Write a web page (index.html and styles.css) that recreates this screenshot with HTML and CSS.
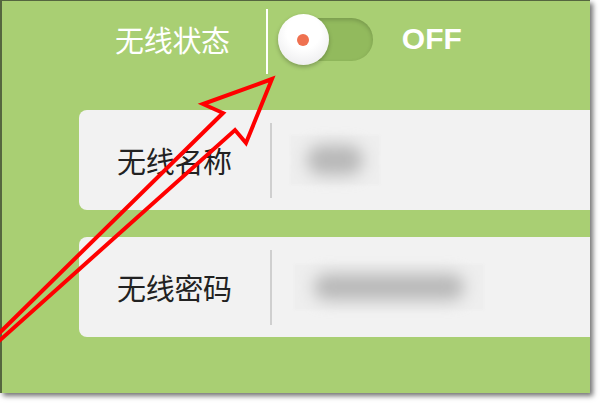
FILE: index.html
```html
<!DOCTYPE html>
<html lang="zh-CN">
<head>
    <meta charset="UTF-8">
    <title>无线设置</title>
    <link rel="stylesheet" href="styles.css">
</head>
<body>
    <div class="frame">
        <div class="status-row">
            <span class="status-label">无线状态</span>
            <span class="divider-light"></span>
            <div class="toggle">
                <span class="knob"><span class="dot"></span></span>
            </div>
            <span class="state">OFF</span>
        </div>

        <div class="card">
            <span class="card-label">无线名称</span>
            <span class="divider"></span>
            <div class="mask mask-name"><span class="blob"></span></div>
        </div>

        <div class="card">
            <span class="card-label">无线密码</span>
            <span class="divider"></span>
            <div class="mask mask-pass"><span class="blob"></span></div>
        </div>
    </div>

    <svg class="arrow" width="600" height="404" viewBox="0 0 600 404">
        <polygon points="272,79 203,104 223,113 -20,352 -20,358 235,130 246,143"
                 fill="none" stroke="#f00" stroke-width="4" stroke-linejoin="miter"/>
    </svg>
</body>
</html>
```

FILE: styles.css
```css
body {
    margin: 0;
    background-color: #fff;
    font-family: 'Noto Sans CJK SC', 'Noto Sans', sans-serif;
    position: relative;
    width: 600px;
    height: 404px;
    overflow: hidden;
}

.frame {
    width: 588px;
    height: 392px;
    background-color: #a9cf73;
    border-left: 2px solid #55663f;
    border-top: 1px solid #55663f;
    box-shadow: 3px 3px 5px rgba(0, 0, 0, 0.55);
    overflow: hidden;
}

.status-row {
    display: flex;
    align-items: center;
    height: 76px;
    padding-left: 113px;
}

.status-label {
    color: #fff;
    font-size: 29px;
    line-height: 1;
    letter-spacing: -0.3px;
}

.divider-light {
    width: 2px;
    height: 65px;
    margin-left: 36px;
    margin-top: 4px;
    background-color: #fff;
}

.toggle {
    position: relative;
    width: 95px;
    height: 50px;
    margin-left: 10px;
}

.toggle::before {
    content: "";
    position: absolute;
    left: 12px;
    right: 0;
    top: 4px;
    height: 43px;
    border-radius: 22px;
    background-color: #92ba5d;
    box-shadow: inset 0 2px 4px rgba(0, 0, 0, 0.18);
}

.knob {
    position: relative;
    display: flex;
    align-items: center;
    justify-content: center;
    width: 51px;
    height: 51px;
    border-radius: 50%;
    background: radial-gradient(circle at 50% 35%, #ffffff 40%, #e6e6e8 100%);
    box-shadow: 0 2px 4px rgba(0, 0, 0, 0.25);
}

.dot {
    width: 12px;
    height: 12px;
    border-radius: 50%;
    background-color: #ef7150;
}

.state {
    margin-left: 29px;
    color: #fff;
    font-family: 'Liberation Sans', Arial, sans-serif;
    font-weight: bold;
    font-size: 30px;
}

.card {
    display: flex;
    align-items: center;
    width: 540px;
    height: 100px;
    margin-left: 77px;
    margin-top: 33px;
    padding-left: 38px;
    background-color: #f2f2f2;
    border-radius: 8px;
}

.card + .card {
    margin-top: 27px;
}

.card-label {
    color: #222;
    font-size: 29px;
    line-height: 1;
    letter-spacing: -0.3px;
}

.divider {
    width: 2px;
    height: 75px;
    margin-left: 38px;
    background-color: #cfcfcf;
}

.mask {
    display: flex;
    align-items: center;
    justify-content: center;
    margin-left: 18px;
    background-color: #eeeeee;
    filter: blur(1px);
}

.mask-name {
    width: 90px;
    height: 50px;
}

.mask-pass {
    width: 190px;
    height: 46px;
    margin-left: 22px;
}

.blob {
    display: block;
    background-color: #b8b8b8;
    border-radius: 20px;
    filter: blur(8px);
}

.mask-name .blob {
    width: 56px;
    height: 30px;
}

.mask-pass .blob {
    width: 150px;
    height: 26px;
}

.arrow {
    position: absolute;
    left: 0;
    top: 0;
}
```
